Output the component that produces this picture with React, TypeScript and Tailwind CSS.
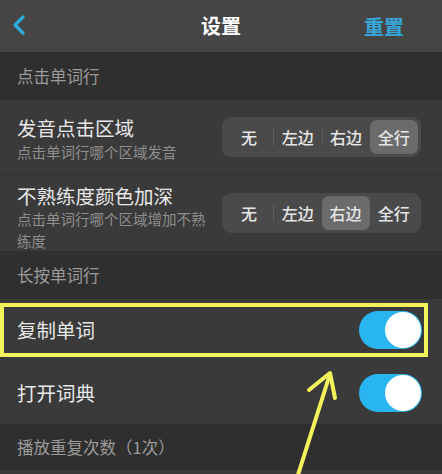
import { ChevronLeft } from "lucide-react";

const font = { fontFamily: '"Noto Sans CJK SC", "Noto Sans", sans-serif' };

function Segmented({ options, active }: { options: string[]; active: number }) {
  return (
    <div className="flex items-center h-[40px] w-[199px] p-[3px] rounded-[9px] bg-[#4a4a4a] shrink-0">
      {options.map((o, i) => {
        const sep = i > 0 && i !== active && i - 1 !== active;
        return (
          <div key={o} className="flex-1 flex items-center h-full">
            {sep && <div className="w-px h-[18px] bg-[#5e5e5e]" />}
            <div
              className={
                "flex-1 h-full flex items-center justify-center rounded-[7px] text-[16px] font-medium text-[#e6e6e6] " +
                (i === active ? "bg-[#6b6b6b]" : "")
              }
            >
              {o}
            </div>
          </div>
        );
      })}
    </div>
  );
}

function Toggle() {
  return (
    <div className="w-[63px] h-[38px] rounded-full bg-[#29b6f0] flex items-center justify-end pr-[1px] shrink-0">
      <div className="w-[36px] h-[36px] rounded-full bg-white" />
    </div>
  );
}

function SectionHead({ children, h }: { children: string; h: string }) {
  return (
    <div className={"flex items-center pl-[17px] bg-[#2f2f2f] text-[16.5px] text-[#9b9b9b] " + h}>
      {children}
    </div>
  );
}

export default function App() {
  const opts = ["无", "左边", "右边", "全行"];
  return (
    <div className="relative w-[442px] h-[474px] overflow-hidden bg-[#3a3a3a]" style={font}>
      <div className="relative h-[52px] bg-[#454545] flex items-center justify-center">
        <ChevronLeft className="absolute left-[3px] top-[9px] text-[#2ea9df]" size={32} strokeWidth={2.4} />
        <span className="text-[20px] font-bold text-white">设置</span>
        <span className="absolute left-[364px] top-[12px] text-[20px] font-bold text-[#37a6d9]">重置</span>
      </div>

      <SectionHead h="h-[48px]">点击单词行</SectionHead>

      <div className="h-[75px] flex items-center justify-between pl-[17px] pr-[21px] border-b border-[#333]">
        <div className="flex flex-col pt-[3px]">
          <span className="text-[19.5px] leading-[27px] text-[#e8e8e8]">发音点击区域</span>
          <span className="text-[14.5px] leading-[22px] text-[#8e8e8e]">点击单词行哪个区域发音</span>
        </div>
        <Segmented options={opts} active={3} />
      </div>

      <div className="h-[76px] flex items-center justify-between pl-[17px] pr-[21px]">
        <div className="flex flex-col w-[192px] pt-[8px]">
          <span className="text-[19.5px] leading-[25px] text-[#e8e8e8]">不熟练度颜色加深</span>
          <span className="text-[14.5px] leading-[22px] text-[#8e8e8e]">点击单词行哪个区域增加不熟练度</span>
        </div>
        <Segmented options={opts} active={2} />
      </div>

      <SectionHead h="h-[48px]">长按单词行</SectionHead>

      <div className="relative h-[62px] flex items-center justify-between pl-[17px] pr-[20px]">
        <span className="text-[19.5px] text-[#e8e8e8]">复制单词</span>
        <Toggle />
        <div className="absolute left-0 top-[4px] w-[428px] h-[54px] border-[4px] border-[#f3f25a]" />
      </div>

      <div className="h-[63px] flex items-center justify-between pl-[17px] pr-[20px]">
        <span className="text-[19.5px] text-[#e8e8e8]">打开词典</span>
        <Toggle />
      </div>

      <SectionHead h="h-[46px]">播放重复次数（1次）</SectionHead>
      <div className="h-px bg-[#3a3a3a]" />

      <svg className="absolute left-0 top-0 pointer-events-none" width="442" height="474" viewBox="0 0 442 474">
        <g stroke="#f3f25a" strokeWidth="4" strokeLinecap="round" strokeLinejoin="round" fill="none">
          <path d="M297 478 L330 374" />
          <path d="M309 390 L330 373 L335 398" />
        </g>
      </svg>
    </div>
  );
}
